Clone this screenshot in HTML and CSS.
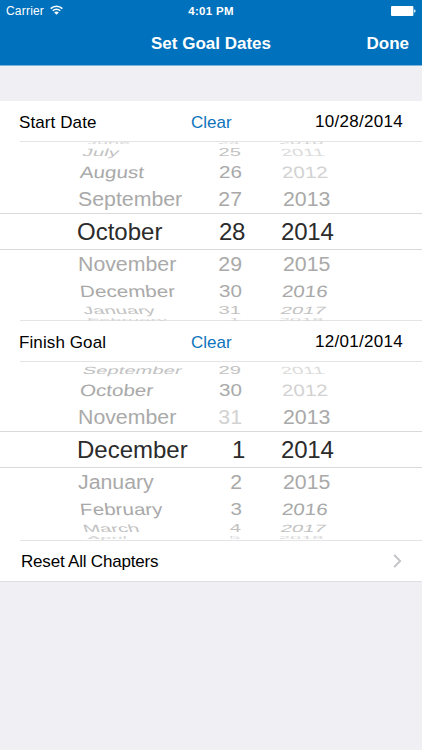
FILE: index.html
```html
<!DOCTYPE html>
<html lang="en">
<head>
<meta charset="UTF-8">
<meta name="viewport" content="width=device-width,initial-scale=1.0" />
<title>Set Goal Dates</title>
<link rel="stylesheet" href="styles.css">
</head>
<body>
<header class="header">
	<div class="status">
		<span class="carrier">Carrier
			<svg class="wifi" width="13" height="10" viewBox="0 0 13 10" fill="none" stroke="#fff" stroke-width="1.6">
				<path d="M.7 3.6a8.2 8.2 0 0 1 11.6 0M2.8 5.8a5.2 5.2 0 0 1 7.4 0"/>
				<path d="M6.5 9.8L4.2 7.5a3 3 0 0 1 4.6 0z" fill="#fff" stroke="none"/>
			</svg>
		</span>
		<span class="time">4:01 PM</span>
		<svg class="battery" width="25" height="10" viewBox="0 0 25 10" fill="#fff">
			<rect width="22.4" height="10" rx="1"/>
			<path d="M23.2 3.3q1.4.4 1.4 1.7t-1.4 1.7z"/>
		</svg>
	</div>
	<div class="nav">
		<h1 class="title">Set Goal Dates</h1>
		<a class="done">Done</a>
	</div>
</header>

<main class="list">
	<div class="cell">
		<span class="label">Start Date</span>
		<a class="clear">Clear</a>
		<span class="date">10/28/2014</span>
	</div>
	<div class="wheel">
		<div class="row r4 up"><span class="month">June</span><span class="day">24</span><span class="year off">2010</span></div>
		<div class="row r3 up"><span class="month">July</span><span class="day">25</span><span class="year off">2011</span></div>
		<div class="row r2 up"><span class="month">August</span><span class="day">26</span><span class="year off">2012</span></div>
		<div class="row r1 up"><span class="month">September</span><span class="day">27</span><span class="year">2013</span></div>
		<div class="row selected"><span class="month">October</span><span class="day">28</span><span class="year">2014</span></div>
		<div class="row r1 down"><span class="month">November</span><span class="day">29</span><span class="year">2015</span></div>
		<div class="row r2 down"><span class="month">December</span><span class="day">30</span><span class="year">2016</span></div>
		<div class="row r3 down"><span class="month">January</span><span class="day">31</span><span class="year">2017</span></div>
		<div class="row r4 down"><span class="month">February</span><span class="day">1</span><span class="year">2018</span></div>
	</div>
	<div class="cell">
		<span class="label">Finish Goal</span>
		<a class="clear">Clear</a>
		<span class="date">12/01/2014</span>
	</div>
	<div class="wheel finish">
		<div class="row r4 up"></div>
		<div class="row r3 up"><span class="month">September</span><span class="day">29</span><span class="year off">2011</span></div>
		<div class="row r2 up"><span class="month">October</span><span class="day">30</span><span class="year off">2012</span></div>
		<div class="row r1 up"><span class="month">November</span><span class="day off">31</span><span class="year">2013</span></div>
		<div class="row selected"><span class="month">December</span><span class="day">1</span><span class="year">2014</span></div>
		<div class="row r1 down"><span class="month">January</span><span class="day">2</span><span class="year">2015</span></div>
		<div class="row r2 down"><span class="month">February</span><span class="day">3</span><span class="year">2016</span></div>
		<div class="row r3 down"><span class="month">March</span><span class="day">4</span><span class="year">2017</span></div>
		<div class="row r4 down"><span class="month">April</span><span class="day">5</span><span class="year">2018</span></div>
	</div>
	<div class="cell reset">
		<span class="label">Reset All Chapters</span>
		<svg class="arrow" width="9" height="14" viewBox="0 0 9 14" fill="none" stroke="#c2c2c7" stroke-width="1.8">
			<path d="M1.2 1l6 6-6 6"/>
		</svg>
	</div>
</main>
</body>
</html>
```
FILE: styles.css
```css
html,body,h1 { margin:0; padding:0; }
body { background:#efeff4; color:#000; font-family:"Liberation Sans",Arial,sans-serif; font-size:17px; }

/* header */
.header { box-sizing:border-box; height:66px; background:#0071bc; border-bottom:1px solid #7db4de; color:#fff; }
.status { display:grid; grid-template-columns:1fr auto 1fr; align-items:center; height:22px; padding:0 6px 0 6px; font-size:12px; line-height:22px; }
.carrier { display:flex; align-items:center; gap:6px; letter-spacing:.2px; }
.wifi { margin-top:-2px; }
.time { font-weight:bold; font-size:11.5px; letter-spacing:.3px; }
.battery { justify-self:end; }
.nav { display:grid; grid-template-columns:1fr auto 1fr; align-items:center; height:43px; padding:0 13px; }
.title { grid-column:2; font-size:17px; font-weight:bold; }
.done { justify-self:end; font-weight:bold; }

/* list */
.list { margin-top:35px; background:#fff; border-bottom:1px solid #dddde2; }
.cell { display:grid; grid-template-columns:172px 1fr auto; grid-template-rows:40px 1px; align-items:center; padding:0 19px 0 18px; }
.cell::after { content:""; grid-column:1 / -1; height:1px; margin:0 -19px 0 2px; background:#e4e4e7; }
.label { padding-top:4px; padding-left:1px; letter-spacing:.1px; }
.clear { color:#0f74bb; padding-top:3px; padding-left:1px; }
.date { padding-top:2px; letter-spacing:.3px; }
.reset { grid-template-columns:1fr auto; grid-template-rows:40px; padding-left:20px; padding-right:20px; }
.reset::after { display:none; }
.reset .label { padding-top:1px; letter-spacing:-.2px; }

/* picker wheel */
.wheel { height:178px; overflow:hidden; background:linear-gradient(#e4e4e7,#e4e4e7) 20px 100% / 100% 1px no-repeat; padding-bottom:1px; }
.row { display:grid; grid-template-columns:200px 46px 1fr; box-sizing:border-box; color:#a9a9a9; white-space:nowrap; }
.day { text-align:right; }
.off { color:#d2d2d2; }

.selected { height:37px; border-top:1px solid #d9d9d9; border-bottom:1px solid #d9d9d9; color:#2b2b2b; font-size:24px; line-height:35px; }
.selected .month { padding-left:77px; }
.selected .day { padding-right:1px; letter-spacing:-.3px; }
.selected .year { padding-left:35px; letter-spacing:-.2px; }

.r1 { height:28px; font-size:21.3px; line-height:28px; }
.r1 .month { padding-left:78px; }
.r1 .day { padding-right:4px; }
.r1 .year { padding-left:37px; }
.r1 span { transform:scaleY(.98); }

.r2 { height:26px; font-size:20.6px; line-height:26px; }
.r2 .month { padding-left:80px; }
.r2 .day { padding-right:4px; }
.r2 .year { padding-left:36px; }
.r2 span { transform:scaleY(.8); }
.r2.up .month, .r2.down .year { transform:scaleY(.8) skewX(-5deg); }
.r2.down .month, .r2.up .year { transform:scaleY(.8) skewX(5deg); }

.r3 { height:13px; font-size:20.2px; line-height:13px; color:#c2c2c2; }
.r3 .month { padding-left:83px; }
.r3 .day { padding-right:5px; }
.r3 .year { padding-left:35px; }
.r3 span { transform:scaleY(.52); }
.r3.up .month, .r3.down .year { transform:scaleY(.52) skewX(-10deg); }
.r3.down .month, .r3.up .year { transform:scaleY(.52) skewX(10deg); }
.r3 .off { color:#dcdcdc; }

.r4 { height:4px; font-size:20px; line-height:4px; color:#d6d6d6; }
.r4 .month { padding-left:87px; }
.r4 .day { padding-right:6px; }
.r4 .year { padding-left:33px; }
.r4.up span { transform:translateY(-1px) scaleY(.2); }
.r4.down span { transform:translateY(1px) scaleY(.2); }
.finish .r4.up { height:2px; }
```
